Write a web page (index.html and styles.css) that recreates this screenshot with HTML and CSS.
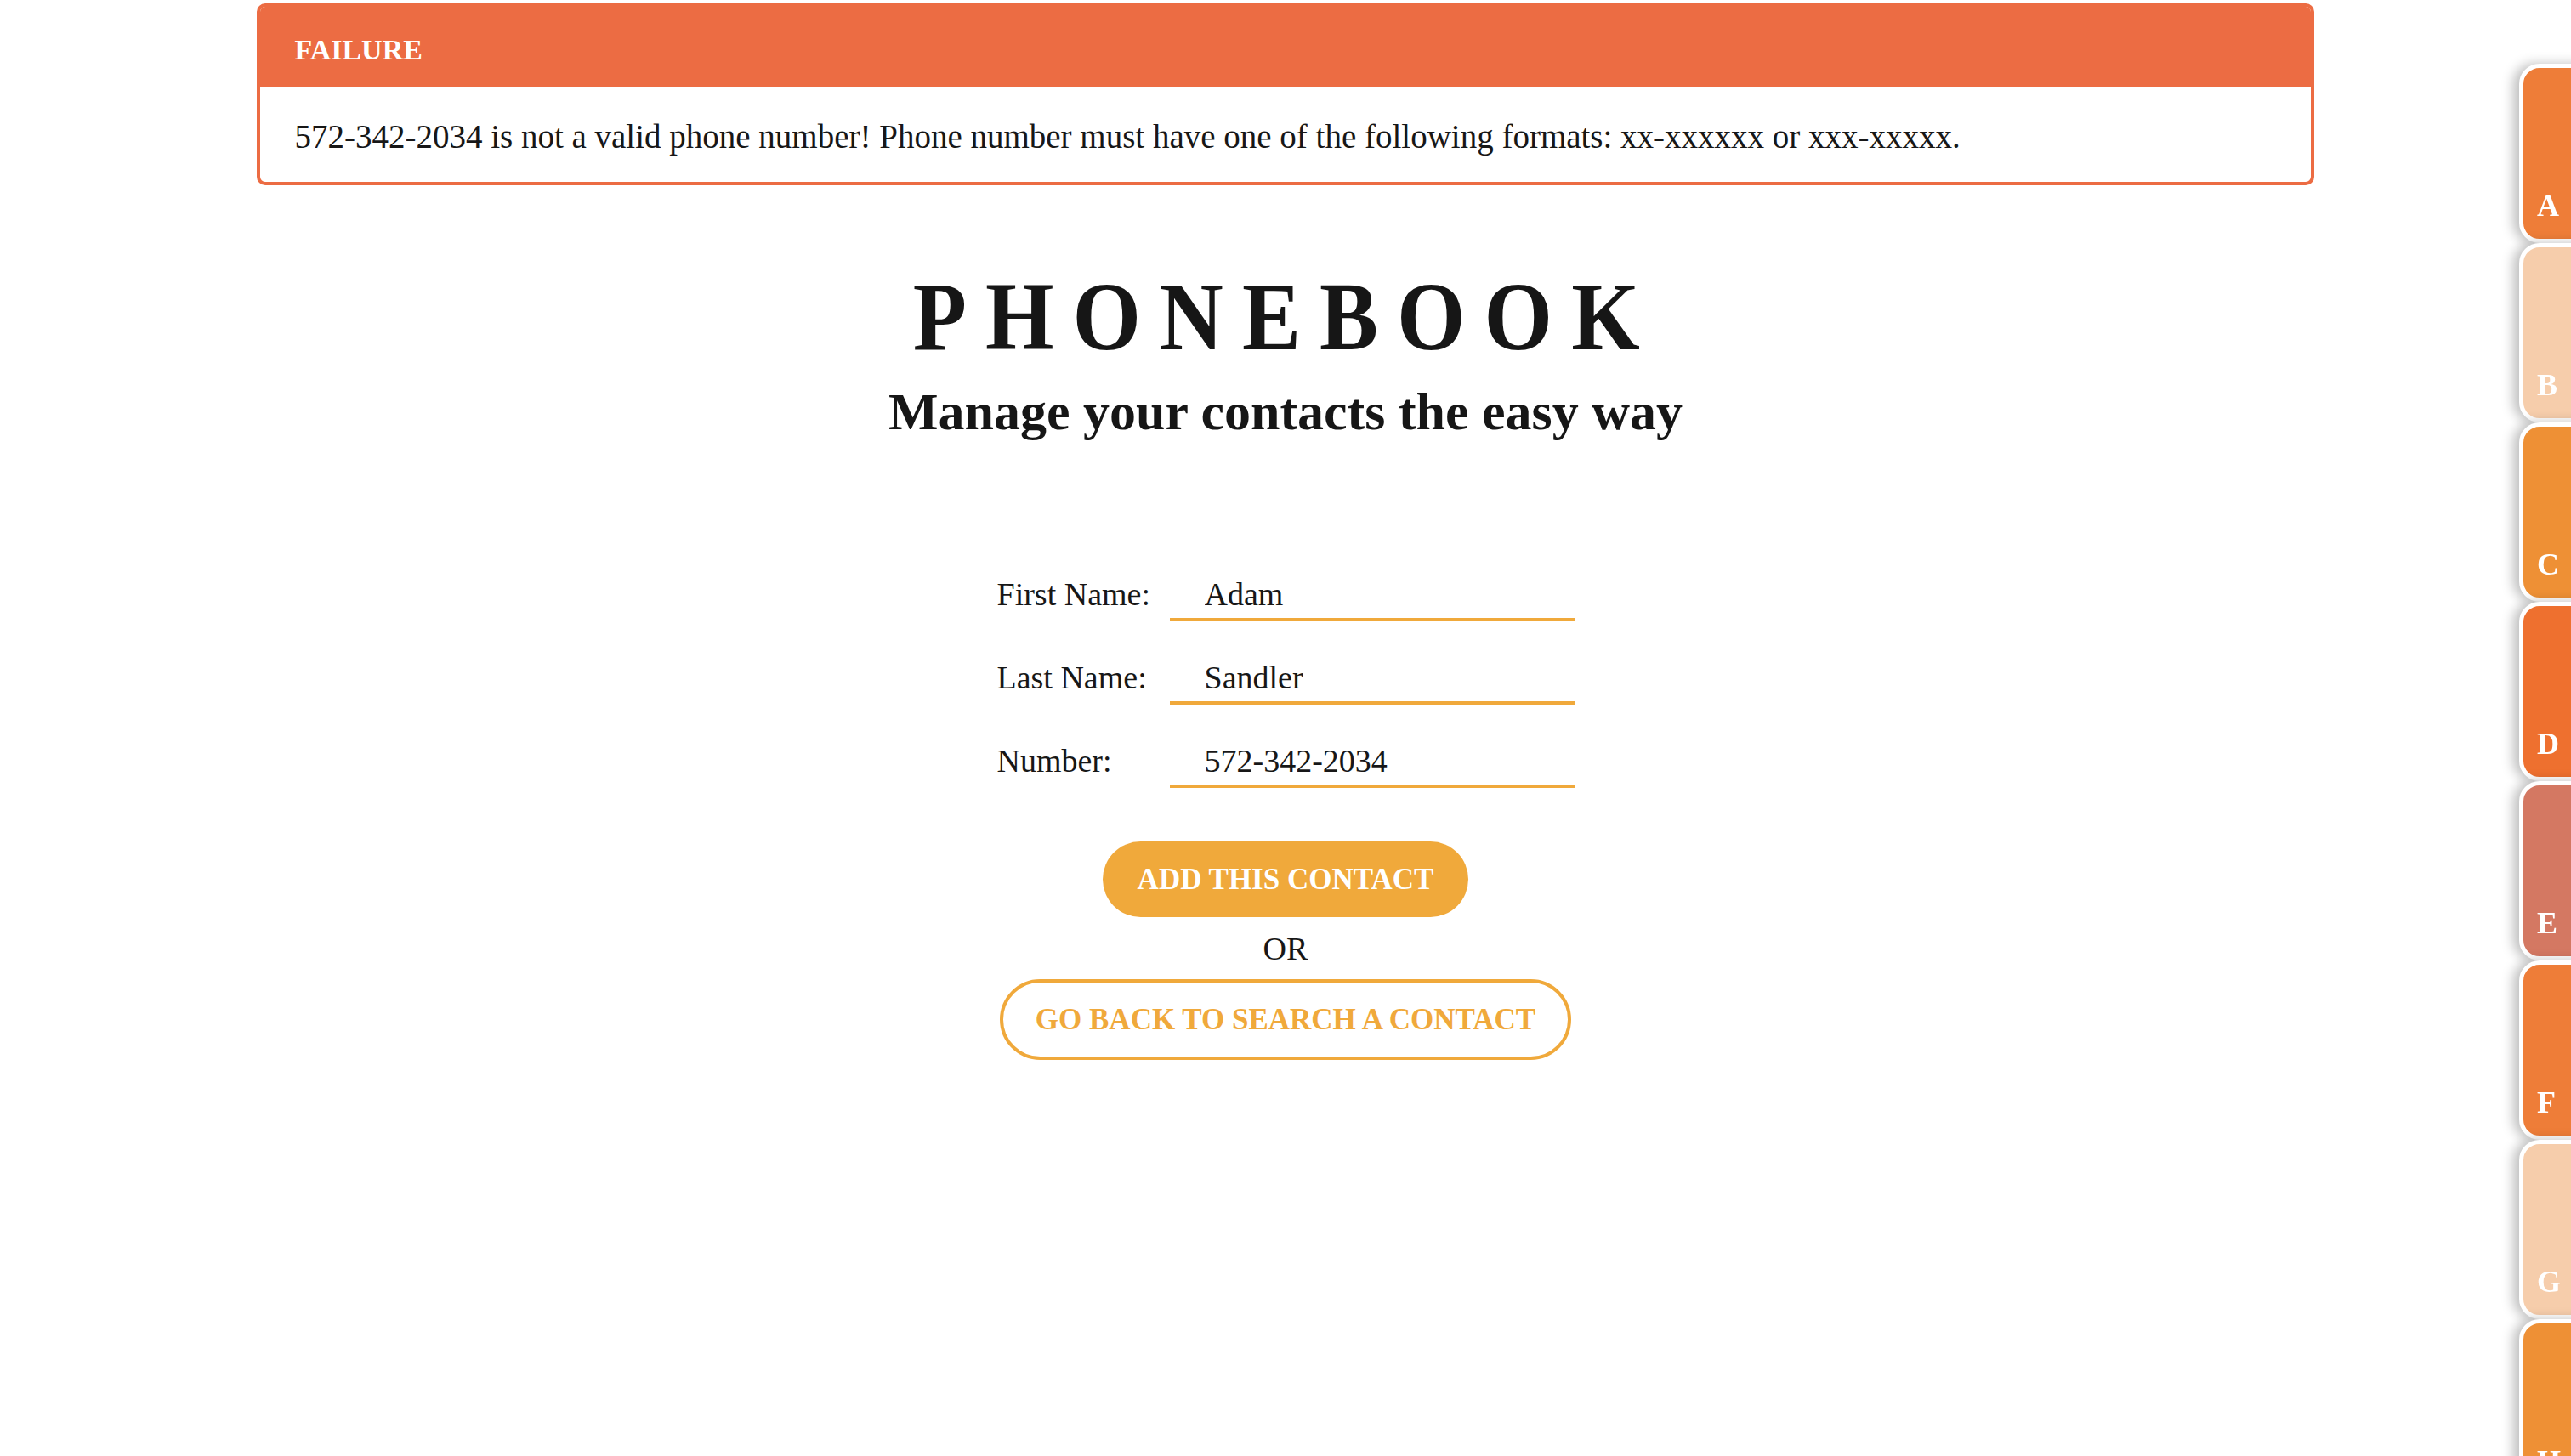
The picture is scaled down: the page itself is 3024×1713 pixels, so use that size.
FILE: index.html
```html
<!DOCTYPE html>
<html lang="en">
<head>
<meta charset="utf-8">
<title>Phonebook</title>
<link rel="stylesheet" href="styles.css">
</head>
<body>
<div class="alert">
  <div class="alert-head">FAILURE</div>
  <div class="alert-body">572-342-2034 is not a valid phone number! Phone number must have one of the following formats: xx-xxxxxx or xxx-xxxxx.</div>
</div>

<header class="hero">
  <h1 class="title"><span class="title-inner">PHONEBOOK</span></h1>
  <h2 class="subtitle">Manage your contacts the easy way</h2>
</header>

<form class="form">
  <div class="row">
    <label class="label" for="first">First Name:</label>
    <input class="field" id="first" type="text" value="Adam">
  </div>
  <div class="row">
    <label class="label" for="last">Last Name:</label>
    <input class="field" id="last" type="text" value="Sandler">
  </div>
  <div class="row">
    <label class="label" for="num">Number:</label>
    <input class="field" id="num" type="text" value="572-342-2034">
  </div>
  <div class="actions">
    <button class="btn btn-fill" type="button">ADD THIS CONTACT</button>
    <div class="or">OR</div>
    <button class="btn btn-outline" type="button">GO BACK TO SEARCH A CONTACT</button>
  </div>
</form>

<nav class="tabs">
  <a class="tab tab-a">A</a>
  <a class="tab tab-b">B</a>
  <a class="tab tab-c">C</a>
  <a class="tab tab-d">D</a>
  <a class="tab tab-e">E</a>
  <a class="tab tab-a">F</a>
  <a class="tab tab-b">G</a>
  <a class="tab tab-c">H</a>
</nav>
</body>
</html>
```

FILE: styles.css
```css
* { box-sizing: border-box; }

html, body {
  margin: 0;
  padding: 0;
  background: #ffffff;
}

body {
  font-family: "Liberation Serif", "Times New Roman", serif;
  color: #171717;
  overflow: hidden;
}

/* Alert */
.alert {
  width: 80%;
  margin: 4px auto 0;
  border: 4px solid #ec6c43;
  border-radius: 10px;
  overflow: hidden;
}

.alert-head {
  background: #ec6c43;
  color: #ffffff;
  font-weight: bold;
  font-size: 34px;
  height: 94px;
  display: flex;
  align-items: center;
  padding-left: 40px;
  padding-top: 8px;
}

.alert-body {
  font-size: 39px;
  height: 112px;
  display: flex;
  align-items: center;
  padding-left: 40px;
  padding-top: 4px;
}

/* Hero */
.hero {
  text-align: center;
  margin-top: 97px;
}

.title {
  margin: 0;
  font-size: 115px;
  line-height: 115px;
  font-weight: bold;
  color: #161616;
}

.title-inner {
  display: inline-block;
  letter-spacing: 24.5px;
  transform: scaleX(0.9);
}

.subtitle {
  margin: 23px 0 0;
  font-size: 62px;
  line-height: 62px;
  font-weight: bold;
  color: #161616;
}

/* Form */
.form {
  width: 679px;
  margin: 156px auto 0;
  display: flex;
  flex-direction: column;
}

.row {
  display: flex;
  align-items: baseline;
  margin-bottom: 38px;
}

.row:last-of-type { margin-bottom: 0; }

.label {
  width: 203px;
  font-size: 38px;
}

.field {
  width: 476px;
  height: 60px;
  border: none;
  border-bottom: 4px solid #f0a93b;
  outline: none;
  background: transparent;
  font-family: "Liberation Serif", "Times New Roman", serif;
  font-size: 38px;
  color: #171717;
  padding: 0 0 0 41px;
}

.actions {
  margin-top: 25px;
  display: flex;
  flex-direction: column;
  align-items: center;
}

.btn {
  font-family: "Liberation Serif", "Times New Roman", serif;
  font-weight: bold;
  font-size: 35px;
  border-radius: 999px;
  cursor: pointer;
  white-space: nowrap;
}

.btn-fill {
  background: #f0a93b;
  color: #ffffff;
  border: none;
  height: 89px;
  padding: 0 41px;
}

.or {
  font-size: 38px;
  line-height: 46px;
  margin: 14px 0 13px;
}

.btn-outline {
  background: #ffffff;
  color: #f0a93b;
  border: 4px solid #f0a93b;
  height: 95px;
  padding: 0 38px;
}

/* Tabs */
.tabs {
  position: fixed;
  top: 75px;
  right: -44px;
  display: flex;
  flex-direction: column;
}

.tab {
  width: 105px;
  height: 211px;
  border: 5px solid #ffffff;
  border-radius: 24px;
  box-shadow: -7px 0 14px rgba(0, 0, 0, 0.25);
  color: #ffffff;
  font-weight: bold;
  font-size: 36px;
  display: flex;
  align-items: flex-end;
  padding: 0 0 18px 16px;
  text-decoration: none;
}

.tab-a { background: #ee7d38; }
.tab-b { background: #f6cdab; }
.tab-c { background: #ee9035; }
.tab-d { background: #ee702f; }
.tab-e { background: #d47862; }
```
